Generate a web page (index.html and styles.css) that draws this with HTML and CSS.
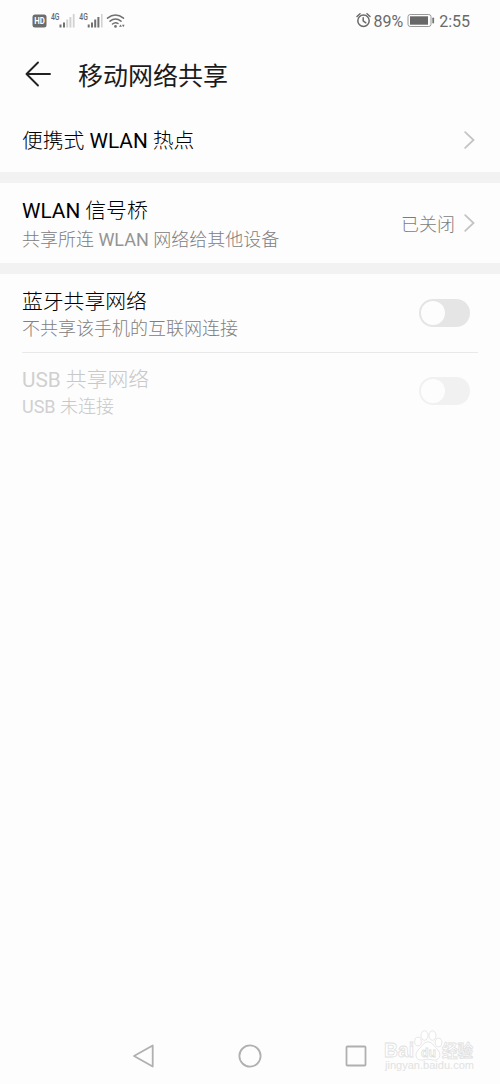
FILE: index.html
```
<!DOCTYPE html>
<html lang="zh-CN">
<head>
<meta charset="utf-8">
<title>移动网络共享</title>
<link rel="stylesheet" href="styles.css">
</head>
<body>
<div class="screen">
  <div class="status">
    <svg class="status-left" width="96" height="20" viewBox="0 0 96 20">
      <rect x="0.5" y="4.5" width="14" height="13" rx="2.5" fill="#6c6c6c"/>
      <text class="hd" x="2.2" y="14.3" textLength="10.6" lengthAdjust="spacingAndGlyphs">HD</text>
      <text class="gen" x="19" y="10" textLength="8.5" lengthAdjust="spacingAndGlyphs">4G</text>
      <g fill="#707070"><rect x="27.5" y="14.5" width="2" height="3"/><rect x="31" y="12.5" width="2" height="5"/></g>
      <g fill="#d2d2d2"><rect x="34.2" y="9.5" width="2" height="8"/><rect x="37.4" y="7" width="2" height="10.5"/><rect x="40.8" y="4" width="1.8" height="13.5"/></g>
      <text class="gen" x="47.3" y="10" textLength="8.5" lengthAdjust="spacingAndGlyphs">4G</text>
      <g fill="#707070"><rect x="55.7" y="14.5" width="2" height="3"/><rect x="59" y="12.5" width="2" height="5"/><rect x="62.2" y="9.5" width="2" height="8"/><rect x="65.4" y="7" width="2" height="10.5"/></g>
      <rect x="69" y="4" width="1.6" height="13.5" fill="#d2d2d2"/>
      <g fill="none" stroke="#707070" stroke-width="1.5" stroke-linecap="round"><path d="M75.5 8.2Q83.500 1.700 91.500 8.200M78 11.200Q83.500 6.800 89 11.200M80.500 14Q83.500 11.600 86 13.500"/></g>
      <circle cx="83.500" cy="16.400" r="1.300" fill="#707070"/>
      <path d="M87 16.700l1.500-2.200 1.500 2.200zM90 14.800h2.600l-1.300 2.500z" fill="#707070"/>
    </svg>
    <div class="status-right">
      <svg width="16" height="18" viewBox="0 0 16 18" fill="none" stroke="#696969" stroke-linecap="round">
        <circle cx="8.500" cy="9.800" r="5.700" stroke-width="1.500"/><path d="M2 5.500 5 2.800M15 5.500 12 2.800M8.200 6.800V9.900L10.800 11.800" stroke-width="1.500"/>
      </svg>
      <span class="pct">89%</span>
      <svg width="28" height="16" viewBox="0 0 28 16"><rect x="1" y="2.500" width="23" height="12" rx="2.200" fill="none" stroke="#999"/><rect x="3" y="4.300" width="18" height="8.400" fill="#686868"/><rect x="25.300" y="5.500" width="1.800" height="6" rx=".8" fill="#777"/></svg>
      <span class="time">2:55</span>
    </div>
  </div>
  <header class="header">
    <svg width="26" height="26" viewBox="0 0 26 26" fill="none" stroke="#222" stroke-width="1.900" stroke-linecap="round" stroke-linejoin="round"><path d="M13 1.500 1.500 13 13 24.500M1.500 13H25"/></svg>
    <h1 class="heading">移动网络共享</h1>
  </header>
  <div class="row row-hotspot">
    <div class="name">便携式 <span class="latin">WLAN</span> 热点</div>
    <svg class="chevron" width="11" height="18" viewBox="0 0 11 18"><path d="M1.200 1.200 9.500 9 1.200 16.800"/></svg>
  </div>
  <div class="band"></div>
  <div class="row row-bridge">
    <div class="label"><div class="name"><span class="latin">WLAN</span> 信号桥</div><div class="note">共享所连 <span class="latin">WLAN</span> 网络给其他设备</div></div>
    <div class="state"><span>已关闭</span><svg class="chevron" width="11" height="18" viewBox="0 0 11 18"><path d="M1.200 1.200 9.500 9 1.200 16.800"/></svg></div>
  </div>
  <div class="band"></div>
  <div class="row row-tether">
    <div class="label"><div class="name">蓝牙共享网络</div><div class="note">不共享该手机的互联网连接</div></div>
    <div class="switch"><div class="knob"></div></div>
  </div>
  <div class="divider"></div>
  <div class="row row-tether disabled">
    <div class="label"><div class="name"><span class="latin">USB</span> 共享网络</div><div class="note"><span class="latin">USB</span> 未连接</div></div>
    <div class="switch"><div class="knob"></div></div>
  </div>
  <nav class="nav">
    <svg width="24" height="26" viewBox="0 0 24 26"><path d="M20.700 2.500V23.500L2 13z"/></svg>
    <svg width="24" height="26" viewBox="0 0 24 26"><circle cx="12" cy="13" r="10.600"/></svg>
    <svg width="24" height="26" viewBox="0 0 24 26"><rect x="2.500" y="3.500" width="19" height="19" rx=".8"/></svg>
  </nav>
  <svg class="watermark" width="100" height="52" viewBox="0 0 100 52">
    <g class="outline">
      <text class="brand" x="3" y="32" textLength="30" lengthAdjust="spacingAndGlyphs">Bai</text>
      <ellipse cx="37" cy="16.500" rx="3.300" ry="4.300"/><ellipse cx="43.500" cy="10.500" rx="3.500" ry="4.700"/><ellipse cx="51.500" cy="10.500" rx="3.500" ry="4.700"/><ellipse cx="57.500" cy="17.500" rx="3.300" ry="4.300"/>
      <path d="M47 17C52 17 53 22 57 25 61 30 58 36 52 35Q47 33 42 35C35 36 33 30 37 25 41 22 42 17 47 17Z"/>
      <text class="du" x="40" y="31.500" textLength="15" lengthAdjust="spacingAndGlyphs">du</text>
      <text class="exp" x="61" y="31.500" textLength="31" lengthAdjust="spacingAndGlyphs">经验</text>
    </g>
    <text class="site" x="4" y="44" textLength="89" lengthAdjust="spacingAndGlyphs">jingyan.baidu.com</text>
  </svg>
</div>
</body>
</html>
```
FILE: styles.css
```
* { box-sizing: border-box; }
body { margin: 0; background: #fdfdfd; }
.screen {
  position: relative;
  display: flex;
  flex-direction: column;
  width: 500px;
  height: 1084px;
  background: #fdfdfd;
  color: #1b1b1b;
  font-family: Roboto, "Noto Sans CJK SC", sans-serif;
}
.status {
  display: flex;
  justify-content: space-between;
  align-items: center;
  height: 40px;
  padding: 0 30px 0 32px;
}
.hd { font: 700 8.5px Roboto, sans-serif; fill: #fff; }
.gen { font: 500 8.5px Roboto, sans-serif; fill: #666; }
.status-right {
  display: flex;
  align-items: center;
  color: #6a6a6a;
  font-size: 16px;
  line-height: 20px;
}
.pct { margin: 3px 4px 0 2px; }
.time { margin: 3px 0 0 4px; }
.header {
  display: flex;
  align-items: center;
  gap: 27px;
  height: 68px;
  padding-left: 25px;
}
.heading { margin: 5px 0 0; font-size: 25px; font-weight: 400; line-height: 36px; }
.row {
  display: flex;
  flex: none;
  justify-content: space-between;
  padding: 0 25px 0 22px;
}
.row-hotspot { height: 64px; align-items: center; }
.row-hotspot .name { margin-top: 1px; }
.row-bridge { height: 80px; align-items: center; }
.row-bridge .label { margin-top: 4px; }
.row-tether { height: 78px; align-items: center; padding-right: 30px; }
.row-tether .label { margin-top: 4px; }
.row-tether.disabled { height: 76px; }
.row-tether.disabled .label { margin-top: 3px; }
.name { color: #000; font-size: 20.8px; font-weight: 300; line-height: 28px; white-space: nowrap; }
.note { color: #808080; font-size: 18px; font-weight: 300; line-height: 26px; white-space: nowrap; }
.latin { font-weight: 400; }
.row-bridge .note { margin-top: 2px; }
.state { display: flex; align-items: center; gap: 9px; color: #7c7c7c; font-size: 18px; font-weight: 300; }
.chevron { fill: none; stroke: #c4c4c4; stroke-width: 1.8; stroke-linecap: round; }
.band { flex: none; height: 11px; background: #f2f2f2; }
.divider { flex: none; height: 1px; margin: 0 22px; background: #e9e9e9; }
.switch { width: 51px; height: 28px; padding: 2px; border-radius: 14px; background: #e5e5e5; }
.knob { width: 24px; height: 24px; border-radius: 50%; background: #fdfdfd; }
.disabled .name, .disabled .note { color: #c8c8c8; }
.disabled .latin { color: #d0d0d0; }
.note .latin { color: #949494; }
.disabled .note .latin { color: #d0d0d0; }
.disabled .switch { background: #f1f1f1; }
.nav {
  display: flex;
  justify-content: space-between;
  align-items: center;
  height: 57px;
  margin-top: auto;
  padding: 0 132px;
  fill: none;
  stroke: #b0b0b0;
  stroke-width: 1.8;
  stroke-linejoin: round;
}
.watermark { position: absolute; right: 19px; bottom: 7px; }
.outline { fill: #fff; stroke: #e0e0e0; stroke-width: 0.8; }
.brand { font: 700 21px "Liberation Sans", sans-serif; }
.du { font: 700 13px "Liberation Sans", sans-serif; }
.exp { font: 700 17px "Noto Sans CJK SC", sans-serif; }
.site { font: 10.5px "Liberation Sans", sans-serif; fill: #e2e2e2; }
```
